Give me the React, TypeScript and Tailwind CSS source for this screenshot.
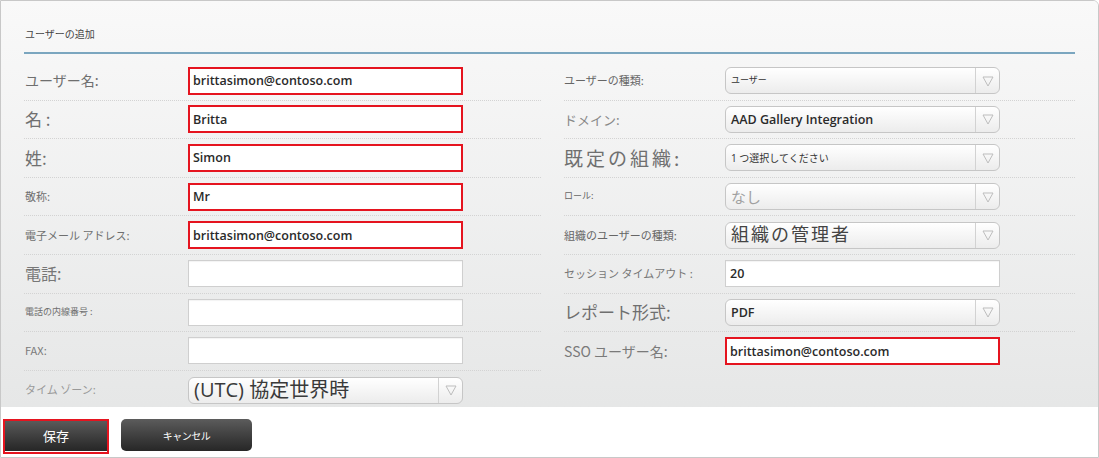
import React from "react";

const JP = { fontFamily: '"Noto Sans CJK JP", "Noto Sans", sans-serif' };
const VAL = { fontFamily: '"Open Sans", "Noto Sans CJK JP", sans-serif' };

type LeftRow = {
  label: string;
  labelCls: string;
  value?: string;
  red?: boolean;
  select?: boolean;
  valueCls?: string;
};

const leftRows: LeftRow[] = [
  { label: "ユーザー名:", labelCls: "text-[14px] text-[#6f6f6f]", value: "brittasimon@contoso.com", red: true },
  { label: "名 :", labelCls: "text-[17px] text-[#6f6f6f]", value: "Britta", red: true },
  { label: "姓:", labelCls: "text-[17px] text-[#6f6f6f]", value: "Simon", red: true },
  { label: "敬称:", labelCls: "text-[11px] text-[#6f6f6f]", value: "Mr", red: true },
  { label: "電子メール アドレス:", labelCls: "text-[11px] text-[#6f6f6f]", value: "brittasimon@contoso.com", red: true },
  { label: "電話:", labelCls: "text-[16px] text-[#777777]" },
  { label: "電話の内線番号 :", labelCls: "text-[9px] text-[#6f6f6f]" },
  { label: "FAX:", labelCls: "text-[11px] text-[#7a7a7a]" },
  { label: "タイム ゾーン:", labelCls: "text-[11px] text-[#9a9a9a]", select: true, value: "(UTC) 協定世界時", valueCls: "text-[20px] text-[#3a3a3a] font-normal" },
];

type RightRow = {
  label: string;
  labelCls: string;
  value: string;
  valueCls: string;
  kind: "select" | "input" | "red";
};

const rightRows: RightRow[] = [
  { label: "ユーザーの種類:", labelCls: "text-[11px] text-[#666]", value: "ユーザー", valueCls: "text-[9px] text-[#333]", kind: "select" },
  { label: "ドメイン:", labelCls: "text-[13px] text-[#888]", value: "AAD Gallery Integration", valueCls: "text-[12.5px] font-semibold text-[#2a2a2a]", kind: "select" },
  { label: "既定の組織:", labelCls: "text-[19px] tracking-[3px] text-[#6f6f6f]", value: "1 つ選択してください", valueCls: "text-[10px] text-[#333]", kind: "select" },
  { label: "ロール:", labelCls: "text-[9px] text-[#666]", value: "なし", valueCls: "text-[15px] text-[#a0a0a0]", kind: "select" },
  { label: "組織のユーザーの種類:", labelCls: "text-[11px] text-[#666]", value: "組織の管理者", valueCls: "text-[18px] tracking-[2px] text-[#444]", kind: "select" },
  { label: "セッション タイムアウト :", labelCls: "text-[11px] text-[#777]", value: "20", valueCls: "text-[12.5px] font-semibold text-[#2a2a2a]", kind: "input" },
  { label: "レポート形式:", labelCls: "text-[17px] text-[#6f6f6f]", value: "PDF", valueCls: "text-[12.5px] font-semibold text-[#2a2a2a]", kind: "select" },
  { label: "SSO ユーザー名:", labelCls: "text-[14px] text-[#7a7a7a]", value: "brittasimon@contoso.com", valueCls: "text-[12.5px] font-semibold text-[#2a2a2a]", kind: "red" },
];

function Arrow() {
  return (
    <div className="flex h-full w-[24px] shrink-0 items-center justify-center border-l border-[#d2d2d2]">
      <svg width="12" height="12" viewBox="0 0 12 12">
        <path d="M1 2 L11 2 L6 11 Z" fill="none" stroke="#bdbdbd" strokeWidth="1" />
      </svg>
    </div>
  );
}

function SelectBox({ value, valueCls }: { value: string; valueCls: string }) {
  return (
    <div className="flex h-[27px] w-[275px] items-center rounded-[6px] border border-[#c6c6c6] bg-gradient-to-b from-white to-[#ececec]">
      <div className={"flex-1 whitespace-nowrap pl-[5px] leading-[1.2] " + valueCls} style={VAL}>
        {value}
      </div>
      <Arrow />
    </div>
  );
}

function RedInput({ value, valueCls }: { value: string; valueCls?: string }) {
  return (
    <div className="flex h-[28px] w-[275px] items-center border-2 border-[#e5141f] bg-white pl-[3px]">
      <span className={"whitespace-nowrap leading-[1.2] " + (valueCls ?? "text-[12.5px] font-semibold text-[#2a2a2a]")} style={VAL}>
        {value}
      </span>
    </div>
  );
}

function PlainInput({ value, valueCls }: { value?: string; valueCls?: string }) {
  return (
    <div className="flex h-[27px] w-[275px] items-center border border-[#cfcfcf] bg-white pl-[4px] shadow-[inset_0_1px_1px_rgba(0,0,0,0.05)]">
      {value ? (
        <span className={"whitespace-nowrap leading-[1.2] " + (valueCls ?? "")} style={VAL}>
          {value}
        </span>
      ) : null}
    </div>
  );
}

export default function App() {
  return (
    <div className="flex h-[458px] w-[1099px] flex-col overflow-hidden rounded-tr-[6px] border border-[#c8c8c8] bg-white" style={JP}>
      {/* Panel */}
      <div className="flex h-[406px] shrink-0 flex-col bg-gradient-to-b from-[#f9f9f9] to-[#e6e7e7] px-[23px]">
        <div className="flex h-[51px] shrink-0 items-end pb-[11px] pl-[1px] text-[10px] leading-[14px] text-[#444]">
          ユーザーの追加
        </div>
        <div className="h-[2px] w-full shrink-0 bg-[#7ba6bf]" />
        <div className="mt-[8px] flex gap-[23px]">
          {/* Left column */}
          <div className="flex w-[517px] flex-col">
            {leftRows.map((r, i) => (
              <div
                key={i}
                className={
                  "flex h-[38.6px] shrink-0 items-center " +
                  (i < leftRows.length - 1 ? "border-b border-dotted border-[#d3d3d3]" : "")
                }
              >
                <div className={"w-[164px] whitespace-nowrap pl-[1px] leading-[1.2] " + r.labelCls}>{r.label}</div>
                {r.select ? (
                  <SelectBox value={r.value ?? ""} valueCls={r.valueCls ?? ""} />
                ) : r.red ? (
                  <RedInput value={r.value ?? ""} />
                ) : (
                  <PlainInput />
                )}
              </div>
            ))}
          </div>
          {/* Right column */}
          <div className="flex w-[511px] flex-col">
            {rightRows.map((r, i) => (
              <div
                key={i}
                className={
                  "flex h-[38.6px] shrink-0 items-center " +
                  (i < rightRows.length - 1 ? "border-b border-dotted border-[#d3d3d3]" : "")
                }
              >
                <div className={"w-[161px] whitespace-nowrap leading-[1.2] " + r.labelCls}>{r.label}</div>
                {r.kind === "select" ? (
                  <SelectBox value={r.value} valueCls={r.valueCls} />
                ) : r.kind === "red" ? (
                  <RedInput value={r.value} valueCls={r.valueCls} />
                ) : (
                  <PlainInput value={r.value} valueCls={r.valueCls} />
                )}
              </div>
            ))}
          </div>
        </div>
      </div>
      {/* Button bar */}
      <div className="flex flex-1 items-start gap-[12px] bg-white pl-[2px] pt-[12px]">
        <div className="h-[35px] w-[106px] border-2 border-[#e5141f] bg-white">
          <div className="flex h-[30px] w-full items-center justify-center bg-gradient-to-b from-[#5a5a5a] to-[#262626] text-[13px] text-white">
            保存
          </div>
        </div>
        <div className="flex h-[32px] w-[131px] items-center justify-center rounded-[5px] bg-gradient-to-b from-[#5c5c5c] to-[#272727] text-[10px] tracking-[-0.5px] text-white">
          キャンセル
        </div>
      </div>
    </div>
  );
}
